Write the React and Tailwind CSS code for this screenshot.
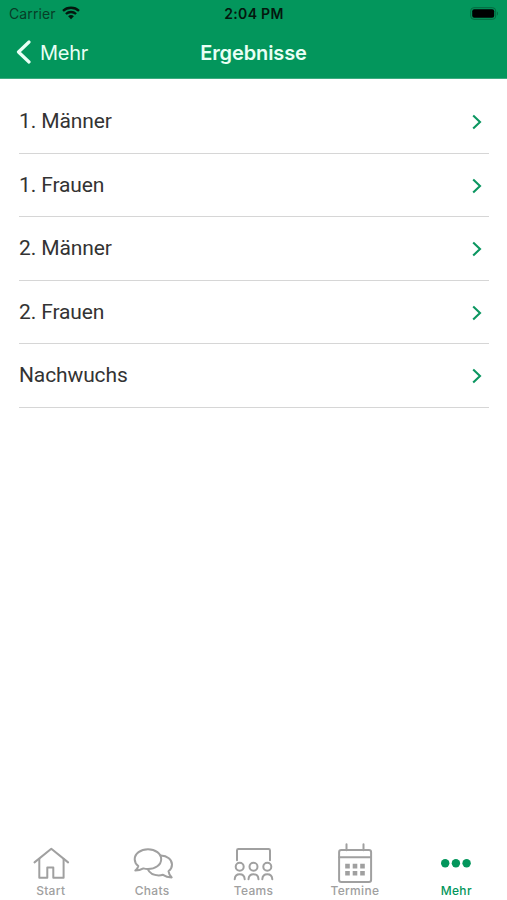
import React from 'react';

const rows = ['1. Männer', '1. Frauen', '2. Männer', '2. Frauen', 'Nachwuchs'];

const HomeIcon = () => (
    <>
        <path d="M5.5 21.4 22.3 7.8 39.1 21.4" />
        <path d="M10.3 18v18.8h8V26.5h6v10.3h10.3V18" />
    </>
);

const ChatsIcon = () => (
    <>
        <path d="M8.3 25C6 23.200 4.700 20.700 4.700 18.200 4.700 12.600 10.600 8.200 18 8.200S31.200 12.600 31.200 18.200 25.300 28 18 28c-1.600 0-3.200-.2-4.600-.6-2.400 1.400-5.200 2.200-8.100 2.200 1.600-1.300 2.700-2.900 3-4.600z" />
        <path d="M30.800 14.600c6.500.3 11.200 4 11.200 9 0 2.700-1.300 5-3.500 6.600.2 2.400 1.400 4.400 3.200 6.200-3.300-.2-6.300-1-8.700-2.600-1.400.4-2.800.6-4.300.6-5 0-9.200-2.300-11-6.200" />
    </>
);

const TeamsIcon = () => (
    <>
        <path d="M6 19.200V9.400q0-1.400 1.400-1.400h30.200q1.400 0 1.400 1.400v9.800" />
        <circle cx="8.700" cy="25.700" r="4" />
        <circle cx="22.500" cy="25.700" r="4" />
        <circle cx="36.300" cy="25.700" r="4" />
        <path d="M3.700 38.200c.2-3 2-4.900 5-4.900s4.800 1.900 5 4.900M17.500 38.200c.2-3 2-4.900 5-4.900s4.800 1.900 5 4.900M31.300 38.200c.2-3 2-4.900 5-4.900s4.800 1.900 5 4.900" />
    </>
);

const CalendarIcon = () => (
    <>
        <rect x="6.100" y="9.100" width="32" height="31.800" rx="2.200" />
        <path d="M6.100 16.200h32M13.500 3.200v6M30.500 3.200v6" />
        <path
            d="M12.200 22.800h4.600v4.600h-4.600zM19.700 22.800h4.600v4.600h-4.600zM27.200 22.800h4.600v4.600h-4.600zM12.200 30h4.600v4.600h-4.600zM19.700 30h4.600v4.600h-4.600zM27.200 30h4.600v4.600h-4.600z"
            fill="currentColor"
            stroke="none"
        />
    </>
);

const MoreIcon = () => (
    <g fill="currentColor" stroke="none">
        <circle cx="11.200" cy="22.300" r="4.200" />
        <circle cx="21.900" cy="22.300" r="4.200" />
        <circle cx="32.600" cy="22.300" r="4.200" />
    </g>
);

const tabs = [
    { label: 'Start', Icon: HomeIcon },
    { label: 'Chats', Icon: ChatsIcon },
    { label: 'Teams', Icon: TeamsIcon },
    { label: 'Termine', Icon: CalendarIcon },
    { label: 'Mehr', Icon: MoreIcon, active: true },
];

function StatusBar() {
    return (
        <div className="grid h-[28px] grid-cols-3 items-center pl-[9px] pr-[8px] font-['Inter',sans-serif] text-[#04170e]">
            <div className="flex items-center gap-[6px]">
                <span className="pb-[2px] text-[14px] tracking-[0.100px] text-[#073d27]">Carrier</span>
                <svg className="-mt-[2px]" width="18" height="14" viewBox="0 0 18 14" fill="none" stroke="currentColor" strokeWidth="2.300">
                    <path d="M1 4.900c4.400-4.200 11.600-4.200 16 0M3.900 8c2.900-2.700 7.300-2.700 10.200 0" />
                    <path d="M6.100 10.200c1.700-1.500 4.100-1.500 5.800 0L9 13.200z" fill="currentColor" stroke="none" />
                </svg>
            </div>
            <span className="pb-[2px] text-center text-[14px] font-semibold tracking-[0.300px]">2:04 PM</span>
            <svg className="-mt-[2px] justify-self-end" width="29" height="13" viewBox="0 0 29 13">
                <rect x=".7" y=".7" width="25" height="11.600" rx="3.200" fill="none" stroke="#06683f" strokeWidth="1" />
                <rect x="2.200" y="2.200" width="22" height="8.600" rx="2" fill="#000" />
                <path d="M27 4.500c1.300.5 1.300 3.500 0 4z" fill="#06683f" />
            </svg>
        </div>
    );
}

function App() {
    return (
        <div className="flex h-[900px] w-full flex-col bg-white font-['Roboto',sans-serif]">
            <header className="h-[79px] border-b border-[#3dab80] bg-[#03965c]">
                <StatusBar />
                <div className="grid h-[50px] grid-cols-3 items-center font-['Inter',sans-serif] text-[20px] text-[#e9fff5]">
                    <div className="flex items-center gap-[9px] pl-[16px]">
                        <svg className="-mt-[2px]" width="15" height="24" viewBox="0 0 15 24" fill="none" stroke="currentColor" strokeWidth="3.200" strokeLinecap="round" strokeLinejoin="round">
                            <path d="M13 2 2.500 12 13 22" />
                        </svg>
                        <span className="tracking-[-0.300px]">Mehr</span>
                    </div>
                    <h1 className="text-center font-semibold tracking-[-0.100px]">Ergebnisse</h1>
                </div>
            </header>

            <main className="flex-1 pl-[19px] pr-[18px] pt-[11px]">
                {rows.map((row) => (
                    <div key={row} className="flex h-[63.500px] items-center justify-between border-b-[1.500px] border-[#d6d6d6] pr-[7px] text-[21px] text-[#333]">
                        <span className="pt-[1px] tracking-[-0.120px]">{row}</span>
                        <svg className="mt-[2px]" width="10" height="16" viewBox="0 0 10 16" fill="none" stroke="#0b9660" strokeWidth="2.100">
                            <path d="m1.200 1.500 6.800 6.500-6.800 6.500" />
                        </svg>
                    </div>
                ))}
            </main>

            <nav className="grid h-[59px] grid-cols-5">
                {tabs.map(({ label, Icon, active }) => (
                    <div key={label} className={active ? 'flex flex-col items-center text-[#03965c]' : 'flex flex-col items-center text-[#a0a0a0]'}>
                        <svg width="44" height="44" viewBox="0 0 44 44" fill="none" stroke="currentColor" strokeWidth="2" strokeLinecap="round" strokeLinejoin="round">
                            <Icon />
                        </svg>
                        <span className="font-['Inter',sans-serif] text-[12px] font-medium leading-[12px] tracking-[0.300px]">{label}</span>
                    </div>
                ))}
            </nav>
        </div>
    );
}

export default App;
